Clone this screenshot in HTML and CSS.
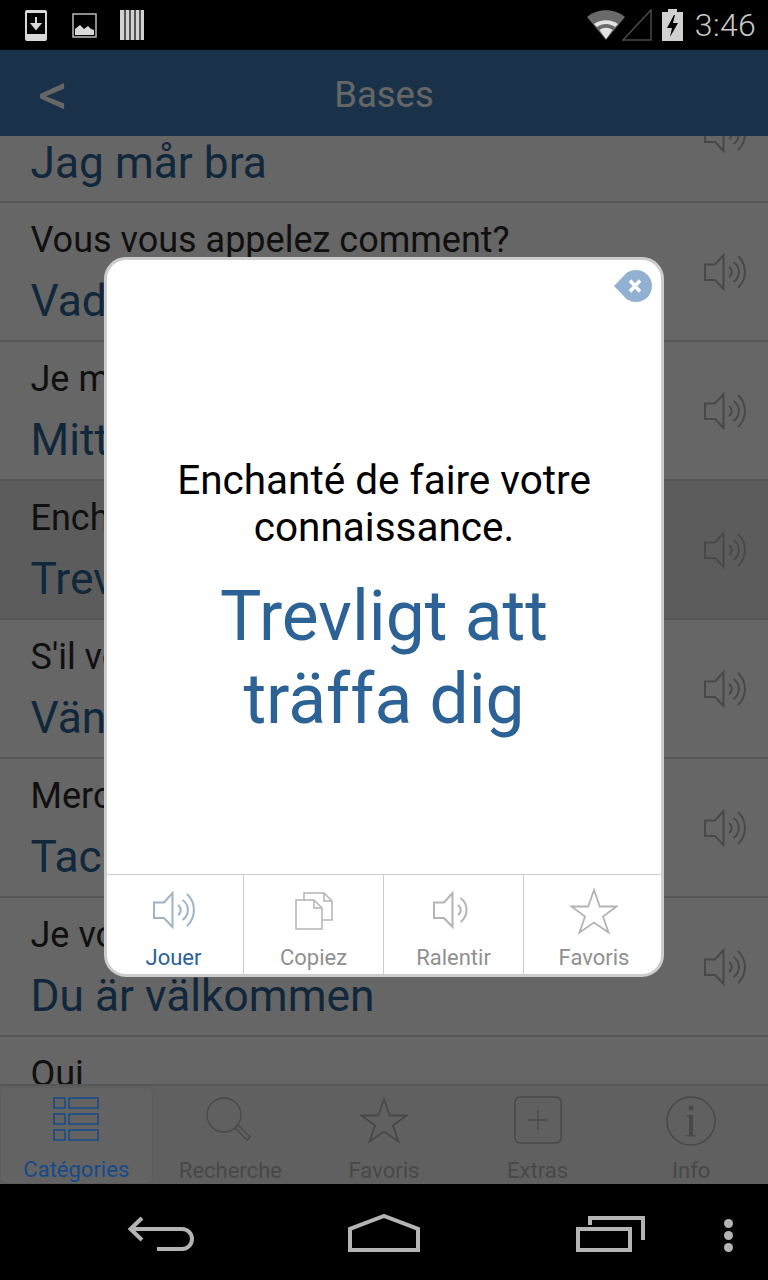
FILE: index.html
```html
<!DOCTYPE html>
<html lang="fr">
<head>
<meta charset="utf-8">
<title>Bases</title>
<link rel="stylesheet" href="styles.css">
</head>
<body>
<svg class="defs" width="0" height="0" aria-hidden="true">
  <symbol id="spk" viewBox="0 0 42 38">
    <path d="M1 11.500h10L19.500 2v34L11 27H1z" fill="none" stroke="currentColor" stroke-width="2"/>
    <path d="M25 14l0 0a6 6 0 0 1 0 10" fill="none" stroke="currentColor" stroke-width="2"/>
    <path d="M29.500 9a12 12 0 0 1 0 20" fill="none" stroke="currentColor" stroke-width="2"/>
    <path d="M34 3a22 22 0 0 1 0 32" fill="none" stroke="currentColor" stroke-width="2"/>
  </symbol>
  <symbol id="star" viewBox="0 0 48 48">
    <path d="M24 3l5.800 16.500H46.500L33 29.500l5.500 16L24 35.500 9.500 45.500l5.500-16L1.500 19.500h16.700z" fill="none" stroke="currentColor" stroke-width="1.800"/>
  </symbol>
</svg>
<div class="screen">
  <div class="status">
    <div class="status-left">
      <svg width="24" height="33" viewBox="0 0 24 33"><rect x="1" y="1" width="22" height="31" rx="2" fill="#d8d8d8"/><rect x="3" y="4" width="18" height="21" fill="#000"/><path d="M12 8v11M8 15l4 5 4-5z" stroke="#d8d8d8" stroke-width="2" fill="#d8d8d8"/></svg>
      <svg width="25" height="25" viewBox="0 0 25 25"><rect x="1" y="1" width="23" height="23" fill="none" stroke="#bbb" stroke-width="1.500"/><path d="M3 22v-6l5-4 4 4 4-3 3 3 3 1v5z" fill="#d8d8d8"/></svg>
      <svg width="24" height="30" viewBox="0 0 24 30"><rect x="0" y="0" width="24" height="30" fill="#d0d0d0"/><path d="M5 0v30M10 0v30M15 0v30M20 0v30" stroke="#000" stroke-width="1.200"/></svg>
    </div>
    <div class="status-right">
      <svg class="wifi" width="38" height="30" viewBox="0 0 38 30"><path d="M0 7C10-2 28-2 38 7L19 30z" fill="#6a6a6a"/><path d="M7 14c7-5 17-5 24 0l-3 3c-5-4-13-4-18 0z" fill="#e4e4e4"/><path d="M12.500 20c4-3 9-3 13 0L19 29z" fill="#e4e4e4"/></svg>
      <svg width="30" height="32" viewBox="0 0 30 32"><path d="M29 1v30H1z" fill="none" stroke="#4a4a4a" stroke-width="1.500"/></svg>
      <svg class="batt" width="21" height="32" viewBox="0 0 21 32"><path d="M6 0h9v3h6v29H0V3h6z" fill="#d0d0d0"/><path d="M12 6L5 19h5l-2 9 8-14h-5l2-8z" fill="#000"/></svg>
      <span class="time">3:46</span>
    </div>
  </div>
  <div class="app">
    <header class="header">
      <span class="back">&lt;</span>
      <span class="title">Bases</span>
    </header>
    <div class="list">
      <div class="scroll">
        <div class="row"><div class="fr">Comment ça va?</div><div class="sv">Jag mår bra</div><svg class="row-spk"><use href="#spk"/></svg></div>
        <div class="row"><div class="fr">Vous vous appelez comment?</div><div class="sv">Vad heter du?</div><svg class="row-spk"><use href="#spk"/></svg></div>
        <div class="row"><div class="fr">Je m'appelle...</div><div class="sv">Mitt namn är...</div><svg class="row-spk"><use href="#spk"/></svg></div>
        <div class="row active"><div class="fr">Enchanté de faire votre connaissance.</div><div class="sv">Trevligt att träffa dig</div><svg class="row-spk"><use href="#spk"/></svg></div>
        <div class="row"><div class="fr">S'il vous plaît</div><div class="sv">Vänligen</div><svg class="row-spk"><use href="#spk"/></svg></div>
        <div class="row"><div class="fr">Merci</div><div class="sv">Tack</div><svg class="row-spk"><use href="#spk"/></svg></div>
        <div class="row"><div class="fr">Je vous en prie</div><div class="sv">Du är välkommen</div><svg class="row-spk"><use href="#spk"/></svg></div>
        <div class="row"><div class="fr">Oui</div><div class="sv">Ja</div><svg class="row-spk"><use href="#spk"/></svg></div>
      </div>
    </div>
    <nav class="tabs">
      <div class="tab selected">
        <svg width="46" height="46" viewBox="0 0 46 46"><g fill="none" stroke="currentColor" stroke-width="1.500"><rect x="1" y="1" width="11" height="10"/><rect x="16" y="1" width="29" height="10"/><rect x="1" y="17" width="11" height="10"/><rect x="16" y="17" width="29" height="10"/><rect x="1" y="33" width="11" height="10"/><rect x="16" y="33" width="29" height="10"/></g></svg>
        <span>Catégories</span>
      </div>
      <div class="tab">
        <svg class="search" width="46" height="46" viewBox="0 0 46 46"><g fill="none" stroke="currentColor" stroke-width="1.300"><circle cx="19" cy="19" r="17"/><path d="M30 32l3-3 12 12-3 3z"/></g></svg>
        <span>Recherche</span>
      </div>
      <div class="tab">
        <svg width="48" height="48" viewBox="0 0 48 48"><use href="#star"/></svg>
        <span>Favoris</span>
      </div>
      <div class="tab">
        <svg width="48" height="48" viewBox="0 0 48 48"><rect x="1" y="1" width="46" height="46" rx="5" fill="none" stroke="currentColor" stroke-width="1.500"/><path d="M24 14v20M14 24h20" stroke="currentColor" stroke-width="1.300"/></svg>
        <span>Extras</span>
      </div>
      <div class="tab">
        <svg width="50" height="50" viewBox="0 0 50 50"><circle cx="25" cy="25" r="24" fill="none" stroke="currentColor" stroke-width="1.500"/><circle cx="25" cy="12" r="2.500" fill="currentColor"/><path d="M21 19h6v20h2.500v1.500h-9V39H23V20.500h-2z" fill="currentColor"/></svg>
        <span>Info</span>
      </div>
    </nav>
    <div class="overlay">
      <div class="dialog">
        <svg class="close" width="38" height="32" viewBox="0 0 38 32"><path d="M0 16L13 2.500C16 .8 19 0 22 0c9 0 16 7 16 16s-7 16-16 16c-3 0-6-.8-9-2.500z" fill="#92b1d2"/><path d="M16 10.500l10 11M26 10.500l-10 11" stroke="#fff" stroke-width="3.500"/></svg>
        <div class="body">
          <p class="d-fr">Enchanté de faire votre connaissance.</p>
          <p class="d-sv">Trevligt att träffa dig</p>
        </div>
        <div class="actions">
          <div class="act on"><svg class="act-icon spk-a" width="42" height="38"><use href="#spk"/></svg><span>Jouer</span></div>
          <div class="act"><svg class="act-icon copy" width="38" height="38" viewBox="0 0 38 38"><g fill="#fff" stroke="currentColor" stroke-width="1.500"><path d="M9 1h20l8 8v19H9z"/><path d="M29 1v8h8" fill="none"/><path d="M1 8h18l8 8v21H1z"/><path d="M19 8v8h8" fill="none"/></g></svg><span>Copiez</span></div>
          <div class="act"><svg class="act-icon spk-a slow" width="36" height="38" viewBox="0 0 36 38"><g fill="none" stroke="currentColor" stroke-width="2"><path d="M1 11.500h10L19.500 2v34L11 27H1z"/><path d="M25 14a6 6 0 0 1 0 10"/><path d="M27.500 7a15 15 0 0 1 0 24"/></g></svg><span>Ralentir</span></div>
          <div class="act"><svg class="act-icon" width="48" height="48" viewBox="0 0 48 48"><use href="#star"/></svg><span>Favoris</span></div>
        </div>
      </div>
    </div>
  </div>
  <div class="sysnav">
    <svg class="n-back" width="67" height="36" viewBox="0 0 67 36"><path d="M15 2L3.500 13 15 24M4 13h51a10 10 0 0 1 0 20H30" fill="none" stroke="#b4b4b4" stroke-width="4"/></svg>
    <svg class="n-home" width="72" height="38" viewBox="0 0 72 38"><path d="M2 36V15L36 2l34 13v21z" fill="none" stroke="#b4b4b4" stroke-width="4"/></svg>
    <svg class="n-rec" width="69" height="36" viewBox="0 0 69 36"><path d="M14 9V2h53v22" fill="none" stroke="#b4b4b4" stroke-width="4"/><rect x="2" y="13" width="52" height="21" fill="none" stroke="#b4b4b4" stroke-width="4"/></svg>
    <div class="n-more"><i></i><i></i><i></i></div>
  </div>
</div>
</body>
</html>
```
FILE: styles.css
```css
* { box-sizing: border-box; }
html, body { margin: 0; padding: 0; background: #000; }
body { font-family: Roboto, "Liberation Sans", sans-serif; }
.defs { position: absolute; }
.screen { width: 768px; height: 1280px; display: flex; flex-direction: column; overflow: hidden; }

.status { height: 50px; background: #000; display: flex; justify-content: space-between; align-items: center; flex: none; }
.status-left { display: flex; align-items: center; gap: 23.500px; padding-left: 24px; }
.status-right { display: flex; align-items: center; padding-right: 12px; }
.wifi { margin-right: -3px; }
.status-right .batt { margin: 0 12px 0 10px; }
.time { font-size: 32px; font-weight: 300; color: #c8c8c8; letter-spacing: .3px; }

.app { position: relative; flex: 1; display: flex; flex-direction: column; min-height: 0; }
.header { height: 86px; flex: none; background: #417db6; display: flex; align-items: center; justify-content: center; position: relative; z-index: 1; }
.back { position: absolute; left: 38px; top: 10px; font-size: 60px; color: #fff; line-height: 70px; }
.title { font-size: 36.500px; color: #fff; padding-top: 3px; }

.list { flex: 1; min-height: 0; overflow: hidden; background: #fff; }
.scroll { margin-top: -71.500px; }
.row { position: relative; height: 138.900px; padding: 15px 30.500px 0; border-bottom: 2px solid #d8d8d8; background: #fff; }
.row.active { background: #e6e6e6; }
.fr { font-size: 36px; line-height: 44px; color: #2a2a2a; white-space: nowrap; }
.sv { font-size: 44.300px; line-height: 58px; margin-top: 10px; color: #2c6295; white-space: nowrap; }
.row-spk { position: absolute; right: 22px; top: 50px; width: 42px; height: 38px; color: #b4b4b4; }

.tabs { height: 100px; flex: none; display: grid; grid-template-columns: repeat(5, 1fr); background: #f0f0f0; border-top: 2px solid #d8d8d8; color: #b4b4b4; }
.tab { display: flex; flex-direction: column; align-items: center; justify-content: space-between; padding: 10px 0 0; font-size: 22px; }
.tab span { line-height: 26px; }
.search { margin-right: 4px; }
.tab.selected { position: relative; z-index: 3; color: #164a8a; background: #636363; border: 1px solid #5d5d5d; border-radius: 6px; margin: 1px 1px 0 0; padding: 9px 0 0; }

.overlay { position: absolute; inset: 0; z-index: 2; background: rgba(0, 0, 0, .6); display: flex; align-items: center; justify-content: center; }
.dialog { position: relative; width: 560px; height: 720px; background: #fff; border: 3px solid #ccc; border-radius: 22px; display: flex; flex-direction: column; overflow: hidden; }
.close { position: absolute; right: 9px; top: 10px; }
.body { flex: 1; padding: 64px 36px 0; display: flex; flex-direction: column; align-items: center; justify-content: center; text-align: center; }
.d-fr { margin: 0; font-size: 40.500px; line-height: 47px; color: #000; }
.d-sv { margin: 24px 0 0; font-size: 69.500px; line-height: 83px; color: #2c6295; }
.actions { height: 100px; flex: none; display: grid; grid-template-columns: 139px 140px 140px 141px; margin: 0 -3px; border-top: 1px solid #ccc; }
.act { display: flex; flex-direction: column; align-items: center; color: #b4b4b4; font-size: 22px; border-left: 1px solid #ccc; position: relative; }
.act:first-child { border-left: none; }
.act span { position: absolute; bottom: 3px; line-height: 26px; color: #909090; }
.act.on span { color: #2c6295; }
.act-icon { margin-top: 12px; }
.spk-a { margin-top: 16px; }
.slow { margin-right: 6px; }
.copy { margin-top: 17px; }
.on .spk-a { color: #9fb3c8; }

.sysnav { height: 96px; flex: none; background: #000; position: relative; display: flex; }
.n-back { position: absolute; left: 127px; top: 32px; }
.n-home { position: absolute; left: 348px; top: 30px; }
.n-rec { position: absolute; left: 576px; top: 32px; }
.n-more { position: absolute; left: 724px; top: 35px; display: flex; flex-direction: column; gap: 3px; }
.n-more i { display: block; width: 9px; height: 9px; border-radius: 50%; background: #b4b4b4; }
```
